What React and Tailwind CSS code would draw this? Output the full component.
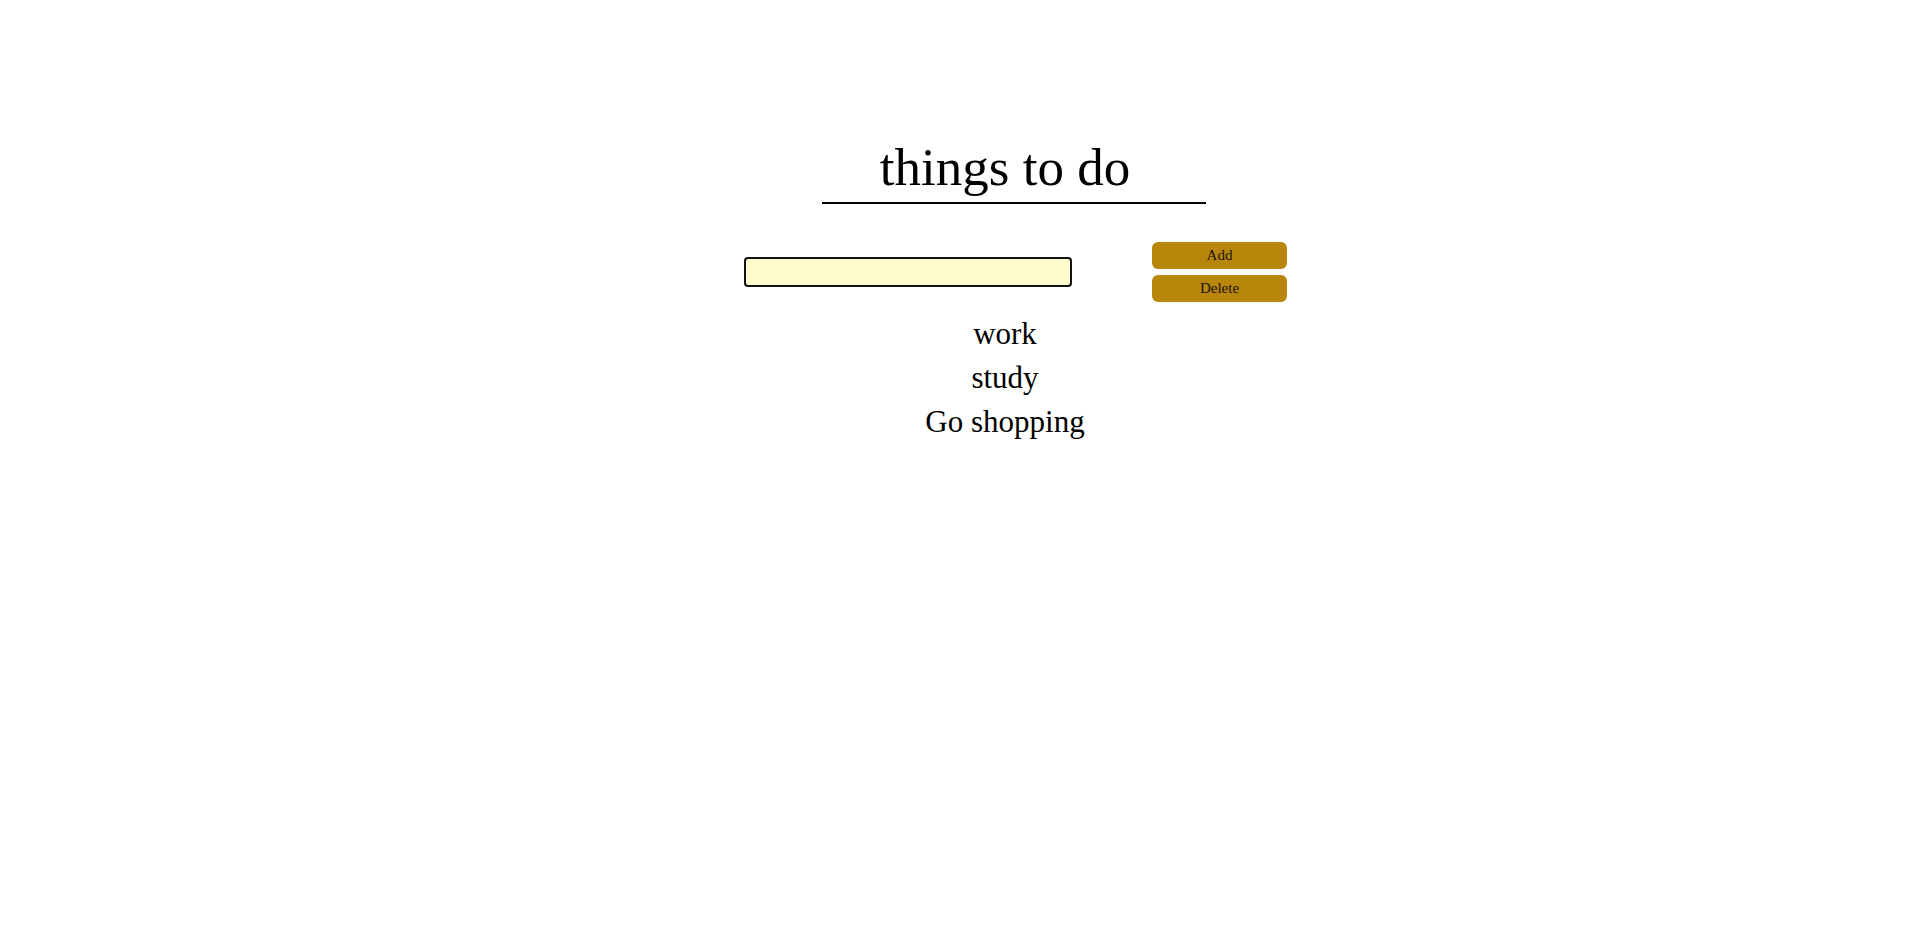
import React from "react";

export default function App() {
  const items = ["work", "study", "Go shopping"];
  return (
    <div className="min-h-screen w-full bg-white text-black" style={{ fontFamily: '"Liberation Serif", serif' }}>
      <div className="pt-[141px]">
        <div className="ml-[822px] w-[384px] border-b-2 border-black pb-[9px]">
          <h1 className="pr-[18px] text-center text-[53px] font-normal leading-[52px]">things to do</h1>
        </div>
        <div className="mt-[38px] ml-[744px] flex items-center gap-[80px]">
          <input
            type="text"
            className="h-[30px] w-[328px] rounded-[4px] border-2 border-[#111] bg-[#fffacd] px-2 outline-none"
          />
          <div className="flex flex-col gap-[6px]">
            <button className="h-[27px] w-[135px] rounded-[6px] bg-[#b8860b] text-[15px] leading-none text-[#1a1205]">
              Add
            </button>
            <button className="h-[27px] w-[135px] rounded-[6px] bg-[#b8860b] text-[15px] leading-none text-[#1a1205]">
              Delete
            </button>
          </div>
        </div>
        <ul className="mt-[10px] ml-[822px] w-[366px]">
          {items.map((t) => (
            <li key={t} className="text-center text-[31px] leading-[44px]">
              {t}
            </li>
          ))}
        </ul>
      </div>
    </div>
  );
}
